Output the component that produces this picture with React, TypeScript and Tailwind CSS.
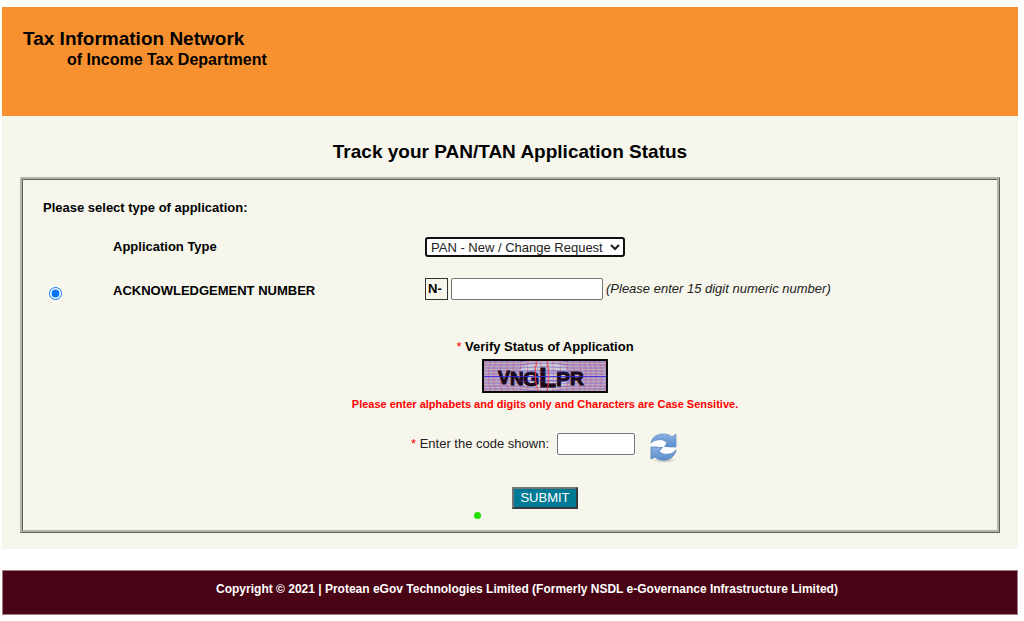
const captchaLetters = [
  { char: "V", x: 16, y: 25, size: 18 },
  { char: "N", x: 28, y: 26, size: 19 },
  { char: "G", x: 41, y: 27, size: 21 },
  { char: "L", x: 57, y: 28, size: 28 },
  { char: "P", x: 74, y: 27, size: 21 },
  { char: "R", x: 88, y: 26, size: 19 },
];

const lines = [3, 6, 9, 12, 15, 18, 21, 24, 27, 30];
const columns = [4, 9, 14, 20, 26, 32, 39, 46, 53, 59, 65, 71, 78, 85, 91, 97, 102, 107, 112, 117, 122];

function Captcha() {
  return (
    <svg width="126" height="34" viewBox="0 0 126 34" role="img" aria-label="Verification code">
      <rect width="126" height="34" fill="#c5aabb" />
      <ellipse cx="62" cy="17" rx="26" ry="14" fill="#cfcbd2" />
      {columns.map((x) => (
        <path
          key={x}
          d={`M${x} 1Q${x + (x - 62) / 10} 17 ${x} 33`}
          stroke="#d8506e"
          strokeWidth="1"
          strokeOpacity="0.45"
          fill="none"
        />
      ))}
      {lines.map((y) => (
        <path
          key={y}
          d={`M1 ${y}H36Q62 ${y + (y - 17) / 3} 88 ${y}H125`}
          stroke="#3d35d8"
          strokeWidth="1"
          strokeOpacity="0.45"
          fill="none"
        />
      ))}
      <g
        fill="#1b0818"
        stroke="#1b0818"
        strokeWidth="1"
        fontFamily="Liberation Sans, sans-serif"
        fontWeight="bold"
      >
        {captchaLetters.map((letter) => (
          <text key={letter.char} x={letter.x} y={letter.y} fontSize={letter.size}>
            {letter.char}
          </text>
        ))}
      </g>
      <path d="M2 17.5H124" stroke="#2a25f0" strokeWidth="1" strokeOpacity="0.8" fill="none" />
      <path d="M36 13H90M36 22H90" stroke="#3d35d8" strokeWidth="1" strokeOpacity="0.5" fill="none" />
      <path d="M55 2Q51 17 56 32M65 2Q69 17 65 32" stroke="#ef3d4a" strokeWidth="1" fill="none" />
      <rect x="1" y="1" width="124" height="32" fill="none" stroke="#07070a" strokeWidth="2" />
    </svg>
  );
}

function RefreshIcon() {
  return (
    <svg width="30" height="32" viewBox="0 0 30 32" aria-hidden="true">
      <defs>
        <linearGradient id="arrow" x1="0" y1="0" x2="0" y2="1">
          <stop offset="0" stopColor="#8ab0df" />
          <stop offset="1" stopColor="#5a8ecf" />
        </linearGradient>
        <radialGradient id="shadow">
          <stop offset="0" stopColor="#777" stopOpacity="0.6" />
          <stop offset="1" stopColor="#777" stopOpacity="0" />
        </radialGradient>
      </defs>
      <ellipse cx="15" cy="28" rx="12" ry="3" fill="url(#shadow)" />
      <path d="M2 12Q8 5 18 7L25 14L26 19Q20 25 12 23L3 17Z" fill="#fcfdff" />
      <path
        d="M2 11C3 5 8 2 14 2C18 2 21 3 23 5L27 2V15H14L18 11C16 8 12 7 9 8C6 8 4 9 2 11Z"
        fill="url(#arrow)"
        stroke="#5f8cc5"
        strokeWidth="0.7"
      />
      <path
        d="M27 18C26 24 21 28 15 28C11 28 8 27 6 25L2 27V15H14L10 19C12 22 16 23 20 22C23 22 25 20 27 18Z"
        fill="url(#arrow)"
        stroke="#4677b6"
        strokeWidth="0.7"
      />
      <path d="M8 13Q9 11 12 11Q15 9 17 12L15 15H19Q22 16 20 19Q17 21 13 19L14 15L9 15Z" fill="#fcfdff" />
    </svg>
  );
}

export default function App() {
  return (
    <div className="bg-white pt-[7px] pr-[6px] pb-[7px] pl-[2px] font-['Liberation_Sans',Arial,sans-serif] text-[13px] leading-5 text-black">
      <header className="h-[109px] bg-[#f7902e] px-[21px] pt-[21px] font-bold">
        <p className="text-[19px] leading-[22px]">Tax Information Network</p>
        <p className="pl-11 text-base leading-5">of Income Tax Department</p>
      </header>

      <main className="bg-[#f6f6ec] px-[18px] pt-6 pb-4">
        <h1 className="text-center text-[19px] leading-6 font-bold">Track your PAN/TAN Application Status</h1>

        <form
          className="mt-[13px] border-3 border-[#b4b4ae] px-5 pt-[18px] pb-[11px] [border-style:ridge]"
          onSubmit={(e) => e.preventDefault()}
        >
          <p className="font-bold">Please select type of application:</p>

          <div className="mt-[17px] grid grid-cols-[70px_312px_1fr] items-center">
            <label htmlFor="applicationType" className="col-start-2 font-bold">
              Application Type
            </label>
            <div className="flex h-6 items-center">
              <select
                id="applicationType"
                className="h-5 w-[200px] rounded-[3px] border-2 border-[#101010] bg-white text-[13px] leading-4 text-[#222]"
              >
                <option>PAN - New / Change Request</option>
                <option>TAN - New / Change Request</option>
              </select>
            </div>
          </div>

          <div className="mt-[18px] grid grid-cols-[70px_312px_1fr] items-center">
            <input
              id="ackRadio"
              type="radio"
              name="searchBy"
              defaultChecked
              className="mt-2 ml-[6px] size-[13px] accent-[#0075ff]"
            />
            <label htmlFor="ackRadio" className="pt-1 font-bold">
              ACKNOWLEDGEMENT NUMBER
            </label>
            <div className="flex items-center gap-[3px]">
              <span className="h-[22px] w-[23px] border border-[#333] pl-[2px] font-bold">N-</span>
              <input
                type="text"
                maxLength={15}
                aria-label="Acknowledgement number"
                className="h-[22px] w-[152px] rounded-[2px] border border-[#767676] bg-white px-1"
              />
              <em className="text-[#222]">(Please enter 15 digit numeric number)</em>
            </div>
          </div>

          <div className="mt-9 ml-[70px] flex flex-col items-center">
            <p className="font-bold">
              <span className="font-normal text-[#f00]">*</span> Verify Status of Application
            </p>
            <div className="mt-[2px]">
              <Captcha />
            </div>
            <p className="mt-[3px] text-[11px] leading-4 font-bold text-[#f00]">
              Please enter alphabets and digits only and Characters are Case Sensitive.
            </p>

            <div className="mt-3 flex items-center">
              <label htmlFor="code" className="text-[#222]">
                <span className="text-[#f00]">*</span> Enter the code shown:
              </label>
              <input
                id="code"
                type="text"
                className="ml-2 h-[22px] w-[78px] rounded-[2px] border border-[#767676] bg-white px-1"
              />
              <button type="button" aria-label="Refresh code" className="ml-[14px] pt-2">
                <RefreshIcon />
              </button>
            </div>

            <button
              type="submit"
              className="mt-[23px] h-[22px] border-2 border-t-[#6f7779] border-r-[#323a3c] border-b-[#323a3c] border-l-[#6f7779] bg-[#007a94] px-[6px] text-[13px] leading-4 text-white"
            >
              SUBMIT
            </button>
            <div className="flex pt-[3px] pr-[136px]">
              <span className="size-[7px] rounded-full bg-[#22df00]" />
            </div>
          </div>
        </form>
      </main>

      <footer className="mt-[21px] h-[45px] border border-[#a57c88] bg-[#480314] pt-2 pl-[34px] text-center text-xs leading-5 font-bold text-white">
        Copyright © 2021 | Protean eGov Technologies Limited (Formerly NSDL e-Governance Infrastructure Limited)
      </footer>
    </div>
  );
}
